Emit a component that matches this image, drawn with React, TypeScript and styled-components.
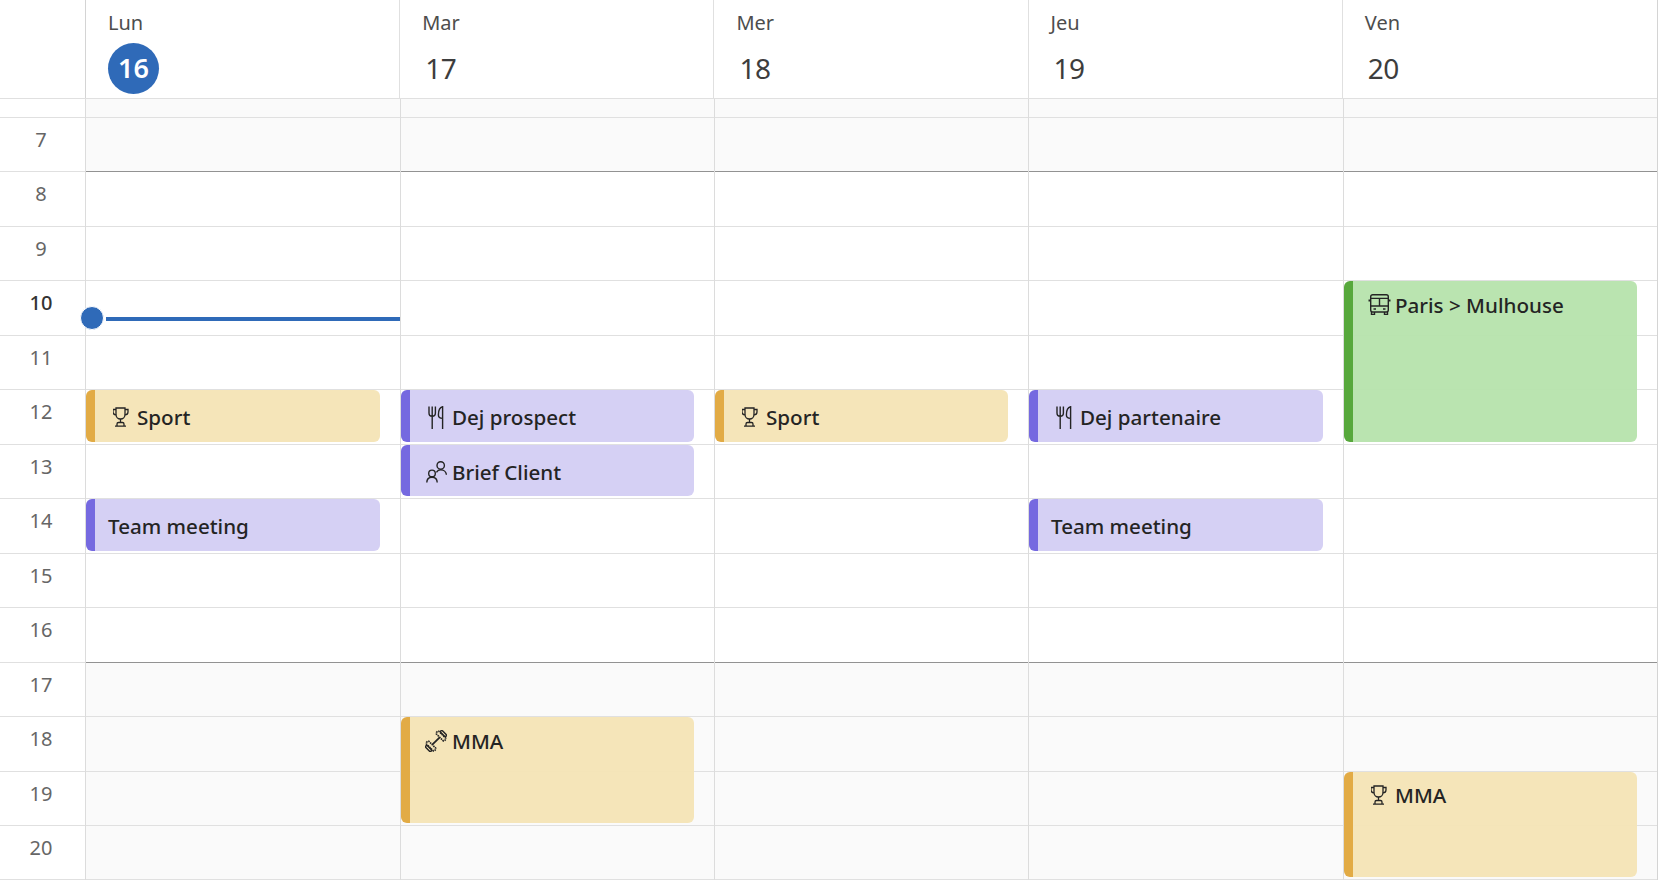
import { FC } from "react";
import styled, { createGlobalStyle } from "styled-components";

type Tone = "yellow" | "purple" | "green";
type IconName = "trophy" | "cutlery" | "people" | "dumbbell" | "bus";

interface CalendarEvent {
    title: string;
    hour: number;
    span: number;
    tone: Tone;
    icon?: IconName;
}

const HOURS = [7, 8, 9, 10, 11, 12, 13, 14, 15, 16, 17, 18, 19, 20];
const ROW_HEIGHT = 54.5;
const LAST_ROW_HEIGHT = 54;

const TONES: Record<Tone, { bg: string; accent: string }> = {
    yellow: { bg: "rgba(244, 228, 181, 0.95)", accent: "#e2ab45" },
    purple: { bg: "rgba(211, 205, 243, 0.95)", accent: "#7569e0" },
    green: { bg: "rgba(182, 227, 172, 0.95)", accent: "#57a83c" },
};

const DAYS: { label: string; date: number; today?: boolean; events: CalendarEvent[] }[] = [
    {
        label: "Lun",
        date: 16,
        today: true,
        events: [
            { title: "Sport", hour: 12, span: 1, tone: "yellow", icon: "trophy" },
            { title: "Team meeting", hour: 14, span: 1, tone: "purple" },
        ],
    },
    {
        label: "Mar",
        date: 17,
        events: [
            { title: "Dej prospect", hour: 12, span: 1, tone: "purple", icon: "cutlery" },
            { title: "Brief Client", hour: 13, span: 1, tone: "purple", icon: "people" },
            { title: "MMA", hour: 18, span: 2, tone: "yellow", icon: "dumbbell" },
        ],
    },
    {
        label: "Mer",
        date: 18,
        events: [{ title: "Sport", hour: 12, span: 1, tone: "yellow", icon: "trophy" }],
    },
    {
        label: "Jeu",
        date: 19,
        events: [
            { title: "Dej partenaire", hour: 12, span: 1, tone: "purple", icon: "cutlery" },
            { title: "Team meeting", hour: 14, span: 1, tone: "purple" },
        ],
    },
    {
        label: "Ven",
        date: 20,
        events: [
            { title: "Paris > Mulhouse", hour: 10, span: 3, tone: "green", icon: "bus" },
            { title: "MMA", hour: 19, span: 2, tone: "yellow", icon: "trophy" },
        ],
    },
];

const isOffHours = (hour: number) => hour < 8 || hour >= 17;

const EventIcon: FC<{ name: IconName }> = ({ name }) => {
    switch (name) {
        case "trophy":
            return (
                <svg width="17" height="20" viewBox="1 0 17 20" fill="none" stroke="#242424" strokeWidth="1.3">
                    <path d="M4 1h9v6.500a4.500 4.500 0 0 1-9 0z" />
                    <path d="M4 2.500H1v2.200a3.200 3.200 0 0 0 3.200 3.200M13 2.500h3v2.200a3.200 3.200 0 0 1-3.200 3.200" />
                    <path d="M8.500 12v3.500M5 18.600v-1.600a1.500 1.500 0 0 1 1.500-1.500h4A1.500 1.500 0 0 1 12 17v1.600M3 19.200h11" />
                </svg>
            );
        case "cutlery":
            return (
                <svg width="16" height="23" viewBox="0 0 16 23" fill="none" stroke="#242424" strokeWidth="1.400">
                    <path d="M1 0.500v6.500a3.200 3.200 0 0 0 6.400 0V0.500M4.200 0.500V23" />
                    <path d="M14.600 23V0.800c-3 .6-4.200 4.400-4.200 8.200 0 2.400 1.400 3.400 4.200 3.400" />
                </svg>
            );
        case "people":
            return (
                <svg width="21" height="22" viewBox="0 0 21 22" fill="none" stroke="#242424" strokeWidth="1.400">
                    <circle cx="6" cy="12.400" r="3.300" />
                    <path d="M.8 21.600c0-3.300 2-5.400 5.200-5.400s5.200 2.100 5.200 5.400" />
                    <circle cx="14.700" cy="4.400" r="3.700" />
                    <path d="M10.400 11.400c1-1.700 2.500-2.600 4.300-2.600 3 0 5.500 2 5.700 5" />
                </svg>
            );
        case "dumbbell":
            return (
                <svg width="22" height="22" viewBox="1.500 1.500 21 21" fill="none" stroke="#242424">
                    <g transform="rotate(-45 12 12)">
                        <path d="M7 12h10" strokeWidth="1.700" />
                        <rect x="0.800" y="8.500" width="2.200" height="7" rx="1" strokeWidth="1.400" />
                        <rect x="3.500" y="6.500" width="3.500" height="11" rx="1" strokeWidth="1.600" strokeDasharray="1.500 .7" />
                        <rect x="17" y="6.500" width="3.500" height="11" rx="1" strokeWidth="1.600" strokeDasharray="1.500 .7" />
                        <rect x="21" y="8.500" width="2.200" height="7" rx="1" strokeWidth="1.400" />
                    </g>
                </svg>
            );
        case "bus":
            return (
                <svg width="23" height="21" viewBox="0 0 23 21" fill="none" stroke="#242424" strokeWidth="1.400">
                    <rect x="2.700" y="0.700" width="17.600" height="17.300" rx="2" />
                    <path d="M2.700 4.400h17.600M11.500 4.400v7.600M2.700 12h17.600M3.500 18v2.400h3V18M16.500 18v2.400h3V18" />
                    <path d="M.5 6.500h2.200M20.300 6.500h2.200" strokeWidth="2" />
                    <path d="M5.500 15h2.500M15 15h2.500" strokeWidth="1.600" />
                </svg>
            );
    }
};

export default function App() {
    return (
        <Root>
            <GlobalStyle />
            <Header>
                <HeaderGutter />
                {DAYS.map((day) => (
                    <DayHead key={day.label}>
                        <DayLabel>{day.label}</DayLabel>
                        <DayDate $today={day.today}>{day.date}</DayDate>
                    </DayHead>
                ))}
            </Header>
            <Body>
                <Gutter>
                    <AllDayGutter />
                    {HOURS.map((hour) => (
                        <HourLabel key={hour} $current={hour === 10}>{hour}</HourLabel>
                    ))}
                </Gutter>
                {DAYS.map((day) => (
                    <DayColumn key={day.label}>
                        <AllDayCell />
                        <HourGrid>
                            {HOURS.map((hour, i) => (
                                <HourCell
                                    key={hour}
                                    $row={i + 1}
                                    $off={isOffHours(hour)}
                                    $strong={hour === 7 || hour === 16}
                                />
                            ))}
                            {day.events.map((ev) => (
                                <EventCard key={ev.title + ev.hour} $row={ev.hour - 6} $span={ev.span} $tone={ev.tone}>
                                    {ev.icon && (
                                        <IconSlot>
                                            <EventIcon name={ev.icon} />
                                        </IconSlot>
                                    )}
                                    {ev.title}
                                </EventCard>
                            ))}
                            {day.today && (
                                <NowMarker>
                                    <NowDot />
                                    <NowLine />
                                </NowMarker>
                            )}
                        </HourGrid>
                    </DayColumn>
                ))}
            </Body>
        </Root>
    );
}

const GlobalStyle = createGlobalStyle`
    html, body {
        margin: 0;
        padding: 0;
        background: #fff;
        overflow: hidden;
    }
    * {
        box-sizing: border-box;
    }
`;

const Root = styled.div`
    width: 1658px;
    height: 880px;
    font-family: "Noto Sans", "Open Sans", sans-serif;
    color: #242424;
    background: #fff;
    border-right: 1px solid #d4d4d4;
`;

const Header = styled.div`
    display: grid;
    grid-template-columns: 86px repeat(5, 1fr);
    height: 99px;
    border-bottom: 1px solid #e0e0e0;
`;

const HeaderGutter = styled.div`
    border-right: 1px solid #d4d4d4;
`;

const DayHead = styled.div`
    padding: 9px 0 0 22px;
    border-right: 1px solid #e0e0e0;
    display: flex;
    flex-direction: column;
    align-items: flex-start;
    &:last-child {
        border-right: none;
    }
`;

const DayLabel = styled.div`
    font-size: 20px;
    line-height: 28px;
    color: #4d4d4d;
`;

const DayDate = styled.div<{ $today?: boolean }>`
    margin-top: 6px;
    width: 51px;
    height: 51px;
    border-radius: 50%;
    font-size: ${(p) => (p.$today ? "27px" : "28px")};
    letter-spacing: ${(p) => (p.$today ? "0" : "-0.5px")};
    line-height: 50px;
    font-weight: ${(p) => (p.$today ? 600 : 400)};
    text-align: ${(p) => (p.$today ? "center" : "left")};
    padding-left: ${(p) => (p.$today ? "0" : "3px")};
    color: ${(p) => (p.$today ? "#fff" : "#3d3d3d")};
    background: ${(p) => (p.$today ? "#2f6ab8" : "transparent")};
`;

const Body = styled.div`
    display: grid;
    grid-template-columns: 85px 315px 314px 314px 315px 314px;
`;

const Gutter = styled.div`
    display: flex;
    flex-direction: column;
`;

const AllDayGutter = styled.div`
    height: 18.5px;
    border-bottom: 1px solid #e0e0e0;
`;

const HourLabel = styled.div<{ $current?: boolean }>`
    height: ${ROW_HEIGHT}px;
    padding: 7px 3px 0 0;
    border-bottom: 1px solid #e0e0e0;
    text-align: center;
    font-size: 20px;
    line-height: 30px;
    font-weight: ${(p) => (p.$current ? 500 : 400)};
    color: ${(p) => (p.$current ? "#333" : "#666")};
    &:last-child {
        height: ${LAST_ROW_HEIGHT}px;
    }
`;

const DayColumn = styled.div`
    display: flex;
    flex-direction: column;
    border-left: 1px solid #dcdcdc;
    min-width: 0;
`;

const AllDayCell = styled.div`
    height: 18.5px;
    background: #fafafa;
    border-bottom: 1px solid #e0e0e0;
`;

const HourGrid = styled.div`
    position: relative;
    display: grid;
    grid-template-columns: minmax(0, 1fr);
    grid-template-rows: repeat(${HOURS.length - 1}, ${ROW_HEIGHT}px) ${LAST_ROW_HEIGHT}px;
`;

const HourCell = styled.div<{ $row: number; $off: boolean; $strong: boolean }>`
    grid-column: 1;
    grid-row: ${(p) => p.$row};
    background: ${(p) => (p.$off ? "#fafafa" : "#fff")};
    border-bottom: 1px solid ${(p) => (p.$strong ? "#929292" : "#e0e0e0")};
`;

const EventCard = styled.div<{ $row: number; $span: number; $tone: Tone }>`
    grid-column: 1;
    grid-row: ${(p) => p.$row} / span ${(p) => p.$span};
    margin: 0 20px 3px 0;
    padding: ${(p) => (p.$span > 1 ? "9.5px" : "13px")} 0 0 13px;
    display: flex;
    align-items: flex-start;
    background: ${(p) => TONES[p.$tone].bg};
    border-left: 9px solid ${(p) => TONES[p.$tone].accent};
    border-radius: 6px;
    font-size: 20.6px;
    line-height: 28px;
    font-weight: 500;
    color: #242424;
    white-space: nowrap;
`;

const IconSlot = styled.span`
    flex: none;
    width: 26px;
    height: 28px;
    margin-right: 3px;
    display: flex;
    align-items: center;
    justify-content: center;
`;

const NowMarker = styled.div`
    position: absolute;
    left: 0;
    right: 0;
    top: 199.5px;
    height: 4px;
`;

const NowDot = styled.div`
    position: absolute;
    left: -6px;
    top: -11px;
    width: 24px;
    height: 24px;
    border-radius: 50%;
    background: #2f6ab8;
    border: 1px solid #fff;
`;

const NowLine = styled.div`
    position: absolute;
    left: 20px;
    right: 0;
    top: 0;
    height: 4px;
    background: #2f6ab8;
`;
